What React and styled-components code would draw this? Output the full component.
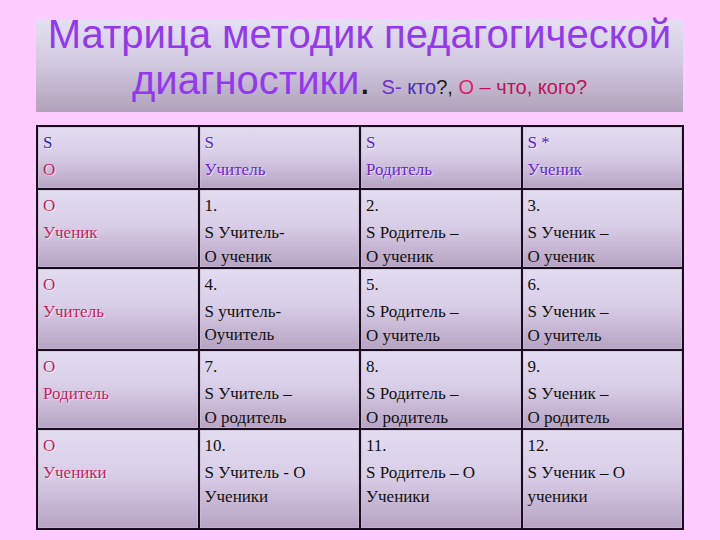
import React from 'react';
import styled, { createGlobalStyle } from 'styled-components';

const GlobalStyle = createGlobalStyle`
  html, body {
    margin: 0;
    padding: 0;
    background: #ffccff;
  }
`;

const Page = styled.div`
  width: 720px;
  height: 540px;
  box-sizing: border-box;
  padding: 20px 36px 0 36px;
  background: #ffccff;
  overflow: hidden;
`;

const TitleBox = styled.div`
  width: 647px;
  height: 92px;
  background: linear-gradient(to bottom, #e4e0f3 0%, #d2cae0 45%, #b0a2ba 100%);
  text-align: center;
  font-family: 'Liberation Sans', Arial, sans-serif;
  color: #9438f0;
  white-space: nowrap;
`;

const TitleLine = styled.div`
  height: ${(p) => p.$h}px;
  line-height: ${(p) => p.$h}px;
  font-size: 40px;
`;

const Dot = styled.span`
  color: #1a1a1a;
`;

const Small = styled.span`
  font-size: 20px;
  color: ${(p) => p.$color};
`;

const Grid = styled.div`
  margin-top: 13px;
  width: 648px;
  box-sizing: border-box;
  border: 2px solid #1a0b1f;
  background: #1a0b1f;
  display: grid;
  grid-template-columns: repeat(4, 1fr);
  grid-template-rows: 61px 77px 80px 77px 98px;
  gap: 2px;
`;

const Cell = styled.div`
  box-sizing: border-box;
  padding: 2px 5px 0 5px;
  background: linear-gradient(to bottom, #e2dcf1 0%, #d9cee8 45%, #b7a3c3 100%);
  box-shadow: inset 0 0 0 1px rgba(200, 190, 210, 0.6);
  font-family: 'Liberation Serif', 'Times New Roman', serif;
  font-size: 17px;
  color: #111;
`;

const Line = styled.div`
  height: ${(p) => p.$h || 27}px;
  line-height: ${(p) => p.$h || 27}px;
  white-space: nowrap;
  color: ${(p) => p.$color || 'inherit'};
  text-shadow: ${(p) => (p.$color ? '1px 1px 1px rgba(255,255,255,0.75)' : 'none')};
`;

const BLUE = '#2e2aa0';
const VIOLET = '#5a22c8';
const PURPLE = '#6a26d6';
const CRIMSON = '#c81e5f';

const header = [
  [{ t: 'S', c: BLUE }, { t: 'О', c: CRIMSON }],
  [{ t: 'S', c: VIOLET }, { t: 'Учитель', c: PURPLE }],
  [{ t: 'S', c: VIOLET }, { t: 'Родитель', c: PURPLE }],
  [{ t: 'S *', c: VIOLET }, { t: 'Ученик', c: PURPLE }],
];

const body = [
  [
    [{ t: 'О', c: CRIMSON }, { t: 'Ученик', c: CRIMSON }],
    [{ t: '1.' }, { t: 'S Учитель-' }, { t: 'О ученик', h: 22 }],
    [{ t: '2.' }, { t: 'S Родитель –' }, { t: 'О ученик', h: 22 }],
    [{ t: '3.' }, { t: 'S Ученик –' }, { t: 'О ученик', h: 22 }],
  ],
  [
    [{ t: 'О', c: CRIMSON }, { t: 'Учитель', c: CRIMSON }],
    [{ t: '4.' }, { t: 'S учитель-' }, { t: 'Оучитель', h: 20 }],
    [{ t: '5.' }, { t: 'S Родитель –' }, { t: 'О учитель', h: 22 }],
    [{ t: '6.' }, { t: 'S Ученик –' }, { t: 'О учитель', h: 22 }],
  ],
  [
    [{ t: 'О', c: CRIMSON }, { t: 'Родитель', c: CRIMSON }],
    [{ t: '7.' }, { t: 'S Учитель –' }, { t: 'О родитель', h: 22 }],
    [{ t: '8.' }, { t: 'S Родитель –' }, { t: 'О родитель', h: 22 }],
    [{ t: '9.' }, { t: 'S Ученик –' }, { t: 'О родитель', h: 22 }],
  ],
  [
    [{ t: 'О', c: CRIMSON }, { t: 'Ученики', c: CRIMSON }],
    [{ t: '10.' }, { t: 'S Учитель - О' }, { t: 'Ученики', h: 22 }],
    [{ t: '11.' }, { t: 'S Родитель – О' }, { t: 'Ученики', h: 22 }],
    [{ t: '12.' }, { t: 'S Ученик – О' }, { t: 'ученики', h: 22 }],
  ],
];

const renderCell = (lines, key) => (
  <Cell key={key}>
    {lines.map((l, i) => (
      <Line key={i} $h={l.h} $color={l.c}>
        {l.t}
      </Line>
    ))}
  </Cell>
);

const App = () => {
  return (
    <Page>
      <GlobalStyle />
      <TitleBox>
        <TitleLine $h={28}>Матрица методик педагогической</TitleLine>
        <TitleLine $h={64}>
          диагностики<Dot>.</Dot>{' '}
          <Small $color="#7030d0">S- </Small>
          <Small $color="#4a2cb8">кто</Small>
          <Small $color="#1a1a1a">?, </Small>
          <Small $color="#e0206a">О</Small>
          <Small $color="#c0105a"> – что, кого?</Small>
        </TitleLine>
      </TitleBox>
      <Grid>
        {header.map((c, i) => renderCell(c, 'h' + i))}
        {body.map((row, r) => row.map((c, i) => renderCell(c, r + '-' + i)))}
      </Grid>
    </Page>
  );
};

export default App;
